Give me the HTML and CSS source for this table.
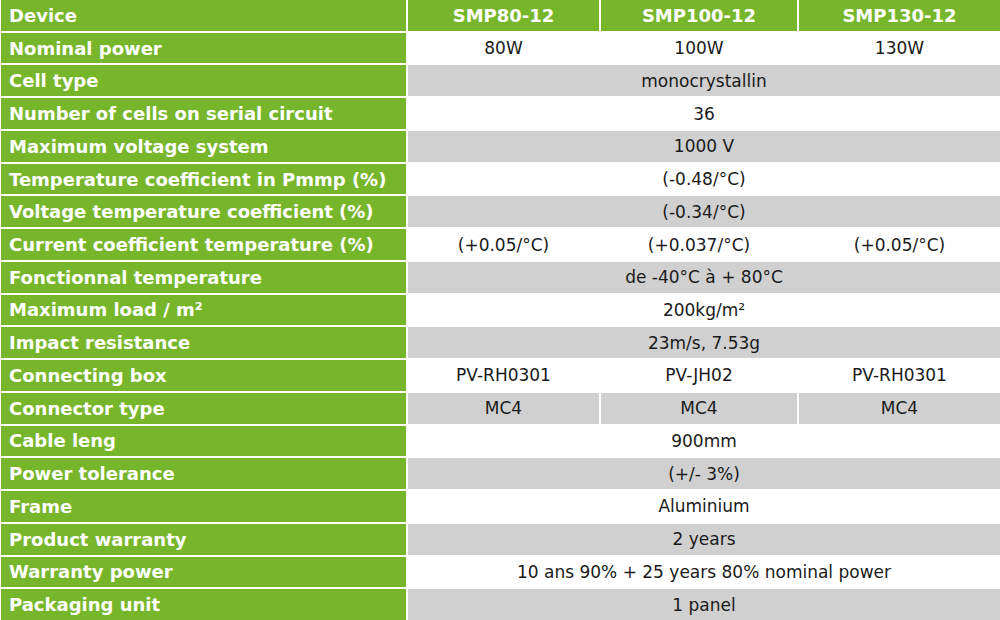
FILE: index.html
```html
<!DOCTYPE html>
<html>
<head>
<meta charset="utf-8">
<link rel="stylesheet" href="styles.css">
</head>
<body>
<div class="table">
  <div class="lbl">Device</div>
  <div class="hd">SMP80-12</div>
  <div class="hd">SMP100-12</div>
  <div class="hd">SMP130-12</div>

  <div class="lbl">Nominal power</div>
  <div class="c w">80W</div>
  <div class="c w">100W</div>
  <div class="c w">130W</div>

  <div class="lbl">Cell type</div>
  <div class="c g span">monocrystallin</div>

  <div class="lbl">Number of cells on serial circuit</div>
  <div class="c w span">36</div>

  <div class="lbl">Maximum voltage system</div>
  <div class="c g span">1000 V</div>

  <div class="lbl">Temperature coefficient in Pmmp (%)</div>
  <div class="c w span">(-0.48/°C)</div>

  <div class="lbl">Voltage temperature coefficient (%)</div>
  <div class="c g span">(-0.34/°C)</div>

  <div class="lbl">Current coefficient temperature (%)</div>
  <div class="c w">(+0.05/°C)</div>
  <div class="c w">(+0.037/°C)</div>
  <div class="c w">(+0.05/°C)</div>

  <div class="lbl">Fonctionnal temperature</div>
  <div class="c g span">de -40°C à + 80°C</div>

  <div class="lbl">Maximum load / m²</div>
  <div class="c w span">200kg/m²</div>

  <div class="lbl">Impact resistance</div>
  <div class="c g span">23m/s, 7.53g</div>

  <div class="lbl">Connecting box</div>
  <div class="c w">PV-RH0301</div>
  <div class="c w">PV-JH02</div>
  <div class="c w">PV-RH0301</div>

  <div class="lbl">Connector type</div>
  <div class="c g">MC4</div>
  <div class="c g">MC4</div>
  <div class="c g">MC4</div>

  <div class="lbl">Cable leng</div>
  <div class="c w span">900mm</div>

  <div class="lbl">Power tolerance</div>
  <div class="c g span">(+/- 3%)</div>

  <div class="lbl">Frame</div>
  <div class="c w span">Aluminium</div>

  <div class="lbl">Product warranty</div>
  <div class="c g span">2 years</div>

  <div class="lbl">Warranty power</div>
  <div class="c w span">10 ans 90% + 25 years 80% nominal power</div>

  <div class="lbl">Packaging unit</div>
  <div class="c g span">1 panel</div>
</div>
</body>
</html>
```

FILE: styles.css
```css
html, body {
  margin: 0;
  padding: 0;
  background: #ffffff;
}

.table {
  display: grid;
  grid-template-columns: 405px 191px 196px 1fr;
  grid-template-rows: repeat(19, 1fr);
  gap: 2px;
  height: 620px;
  width: 999px;
  margin-left: 1px;
  font-family: "DejaVu Sans", "Lato", sans-serif;
}

.lbl {
  background: #77b62b;
  color: #ffffff;
  font-weight: 700;
  font-size: 18px;
  display: flex;
  align-items: center;
  padding-left: 8px;
  white-space: nowrap;
}

.hd {
  background: #77b62b;
  color: #ffffff;
  font-weight: 700;
  font-size: 18px;
  display: flex;
  align-items: center;
  justify-content: center;
}

.c {
  color: #1a1a1a;
  font-size: 17px;
  display: flex;
  align-items: center;
  justify-content: center;
  white-space: nowrap;
}

.w {
  background: #ffffff;
}

.g {
  background: #d0d0d0;
}

.span {
  grid-column: 2 / 5;
}
```
